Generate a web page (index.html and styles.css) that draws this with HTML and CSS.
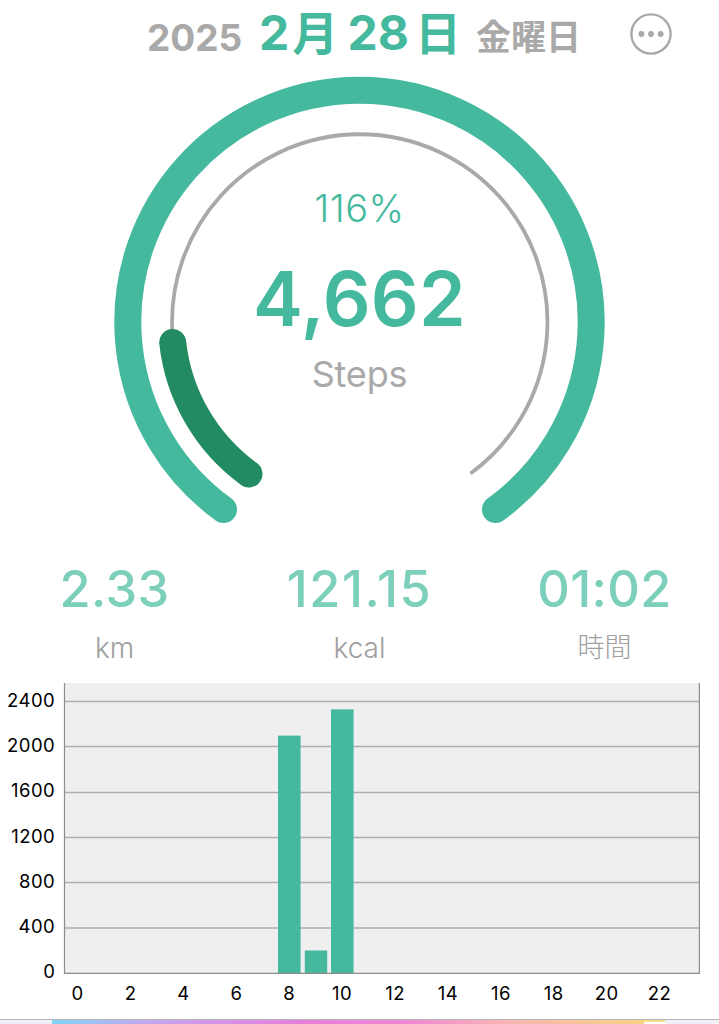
FILE: index.html
```html
<!DOCTYPE html>
<html lang="ja">
<head>
<meta charset="utf-8">
<title>Steps</title>
<link rel="stylesheet" href="styles.css">
</head>
<body>
<main class="screen">
  <header class="header">
    <span class="year">2025</span>
    <h1 class="date">2<span class="kanji month">月</span> 28<span class="kanji day">日</span></h1>
    <span class="weekday">金曜日</span>
    <svg class="more" viewBox="0 0 42 42" role="img" aria-label="More">
      <circle cx="21" cy="21" r="19.6" fill="none" stroke="#a9a9a9" stroke-width="2.4"/>
      <circle cx="11.4" cy="21" r="2.9" fill="#a9a9a9"/>
      <circle cx="21" cy="21" r="2.9" fill="#a9a9a9"/>
      <circle cx="30.6" cy="21" r="2.9" fill="#a9a9a9"/>
    </svg>
  </header>

  <section class="gauge">
    <svg class="rings" viewBox="0 0 492 450" aria-hidden="true">
      <path class="ring-main" d="M109.5 433.5A231.7 231.7 0 1 1 381.5 433.5"/>
      <path class="ring-track" d="M135 397.5A187.7 187.7 0 1 1 356.5 397.5"/>
      <path class="ring-inner" d="M135 398A187.7 187.7 0 0 1 58.7 266.4"/>
    </svg>
    <div class="readout">
      <span class="percent">116%</span>
      <strong class="count">4,662</strong>
      <span class="unit">Steps</span>
    </div>
  </section>

  <section class="stats">
    <div class="stat"><span class="value">2.33</span><span class="label">km</span></div>
    <div class="stat"><span class="value wide">121.15</span><span class="label">kcal</span></div>
    <div class="stat"><span class="value">01:02</span><span class="label kanji-label">時間</span></div>
  </section>

  <svg class="chart" viewBox="0 0 719 336" role="img" aria-label="Steps per hour">
    <rect x="64" y="0" width="636" height="290" fill="#efefef"/>
    <g class="grid">
      <path d="M64 18.5H700M64 63.5H700M64 109.5H700M64 154.5H700M64 199.5H700M64 245H700"/>
    </g>
    <g fill="#44b99d">
      <rect x="278" y="52.6" width="22.6" height="237.4"/>
      <rect x="304.8" y="267.5" width="22.4" height="22.5"/>
      <rect x="331" y="26.4" width="22.6" height="263.6"/>
    </g>
    <path class="axis" d="M64.5 0V290.3H699.4V0"/>
    <g class="tick tick-y">
      <text x="55.3" y="24.3">2400</text>
      <text x="55.3" y="69.3">2000</text>
      <text x="55.3" y="114.3">1600</text>
      <text x="55.3" y="160.3">1200</text>
      <text x="55.3" y="205.3">800</text>
      <text x="55.3" y="250.3">400</text>
      <text x="55.3" y="295.3">0</text>
    </g>
    <g class="tick tick-x">
      <text x="77.7" y="317">0</text>
      <text x="130.6" y="317">2</text>
      <text x="183.5" y="317">4</text>
      <text x="236.4" y="317">6</text>
      <text x="289.3" y="317">8</text>
      <text x="342.2" y="317">10</text>
      <text x="395.1" y="317">12</text>
      <text x="448" y="317">14</text>
      <text x="500.9" y="317">16</text>
      <text x="553.8" y="317">18</text>
      <text x="606.7" y="317">20</text>
      <text x="659.6" y="317">22</text>
    </g>
  </svg>

  <footer class="banner"><div class="banner-art"></div><div class="banner-tag"></div></footer>
</main>
</body>
</html>
```

FILE: styles.css
```css
* { box-sizing: border-box; }
body {
  margin: 0;
  background: #fff;
  font-family: Inter, "Noto Sans CJK JP", sans-serif;
}
.screen {
  width: 719px;
  height: 1024px;
  overflow: hidden;
  display: flex;
  flex-direction: column;
}
.header {
  height: 76px;
  flex: none;
  padding-left: 147px;
  display: grid;
  grid-template-columns: 112px 217px 154px 42px;
  align-items: start;
  white-space: nowrap;
  color: #a9a9a9;
}
.year {
  font-size: 37px;
  line-height: 40px;
  font-weight: 700;
  margin-top: 18px;
}
.date {
  margin: 8px 0 0;
  font-size: 48px;
  line-height: 50px;
  font-weight: 700;
  color: #44b99d;
  word-spacing: -2px;
}
.kanji { font-size: 46px; line-height: 1; }
.month { margin-left: 3px; }
.day { margin-left: 6px; }
.weekday {
  font-size: 35px;
  line-height: 40px;
  font-weight: 700;
  margin-top: 17px;
}
.more {
  width: 42px;
  height: 42px;
  margin-top: 13px;
}
.gauge {
  display: grid;
  justify-content: center;
  height: 484px;
  flex: none;
}
.rings, .readout { grid-area: 1 / 1; }
.rings { width: 492px; height: 450px; }
.rings path { fill: none; }
.ring-main { stroke: #44b99d; stroke-width: 27; stroke-linecap: round; }
.ring-track { stroke: #a9a9a9; stroke-width: 3.8; }
.ring-inner { stroke: #228b62; stroke-width: 27; stroke-linecap: round; }
.readout {
  padding-top: 107px;
  display: flex;
  flex-direction: column;
  align-items: center;
}
.percent {
  font-size: 38px;
  line-height: 50px;
  font-weight: 300;
  letter-spacing: .5px;
  color: #44b99d;
}
.count {
  font-size: 75px;
  line-height: 90px;
  margin-top: 21px;
  font-weight: 600;
  letter-spacing: .2px;
  color: #44b99d;
}
.unit {
  font-size: 36px;
  line-height: 44px;
  margin-top: 8px;
  letter-spacing: -.2px;
  color: #a9a9a9;
}
.stats {
  height: 123px;
  flex: none;
  display: grid;
  grid-template-columns: repeat(3, 245px);
  justify-content: center;
  text-align: center;
}
.stat { display: flex; flex-direction: column; }
.value {
  font-size: 50.5px;
  line-height: 58px;
  font-weight: 500;
  letter-spacing: .4px;
  color: #7ccfba;
}
.value.wide { letter-spacing: 1.6px; }
.label {
  font-size: 28px;
  line-height: 36px;
  margin-top: 12px;
  font-weight: 300;
  color: #a0a0a0;
}
.kanji-label { font-size: 27px; }
.chart { width: 719px; height: 336px; flex: none; display: block; }
.grid { fill: none; stroke: #adadad; stroke-width: 1.3; }
.axis { fill: none; stroke: #8d8d8d; stroke-width: 1.2; }
.tick { font-size: 18.5px; fill: #000; letter-spacing: .5px; }
.tick-y { text-anchor: end; }
.tick-x { text-anchor: middle; }
.banner {
  height: 5px;
  flex: none;
  display: flex;
  padding-left: 52px;
  border-top: 1px solid #b5b5bb;
  background: #f1f0f7;
}
.banner-art {
  width: 592px;
  background: linear-gradient(90deg, #82d5f7 0%, #c5a5ed 17%, #e67edb 42%, #ef87d4 60%, #f8b3b4 76%, #f7d383 100%);
}
.banner-tag {
  width: 21px;
  background: #fff;
  border-top: 2px solid #f9df85;
}
```
